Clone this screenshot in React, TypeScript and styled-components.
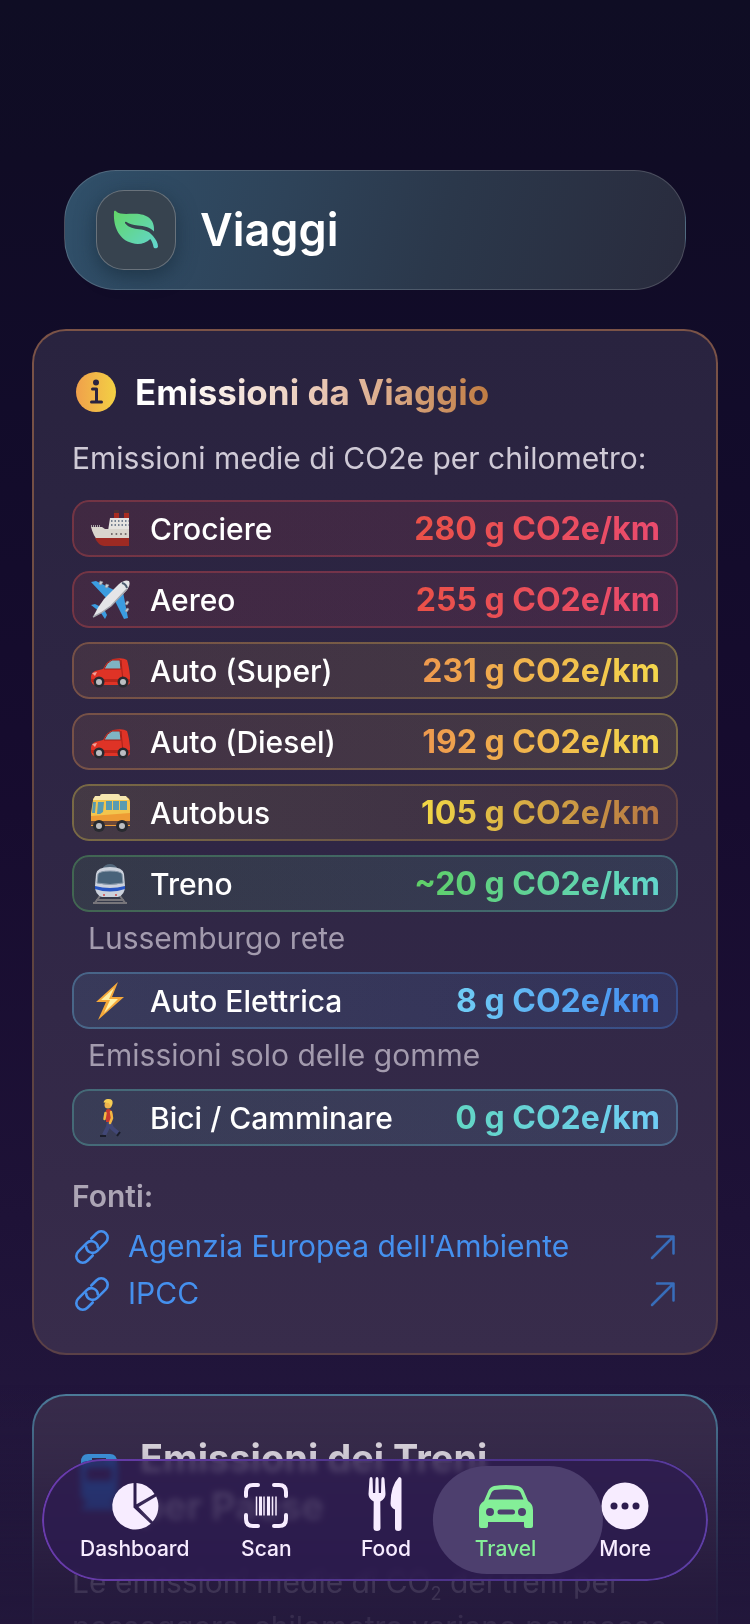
import React from "react";
import styled, { createGlobalStyle } from "styled-components";

const GlobalStyle = createGlobalStyle`
  * {
    box-sizing: border-box;
  }
  body {
    margin: 0;
    background: #0e0b22;
    color: #fff;
    font-family: Inter, "Liberation Sans", sans-serif;
  }
`;

const Screen = styled.div`
  height: 100vh;
  overflow: hidden;
  background: linear-gradient(
    180deg,
    #0f0d24 0%,
    #100c25 10%,
    #120c2a 25%,
    #170c2f 50%,
    #1e1237 75%,
    #22163c 88%,
    #20163a 100%
  );
`;

const Content = styled.main`
  display: flex;
  flex-direction: column;
  gap: 39px;
  padding: 170px 32px 0;
`;

const TitleBar = styled.header`
  display: flex;
  align-items: center;
  gap: 24px;
  margin: 0 32px;
  padding: 19px 31px;
  border: 1px solid rgba(255, 255, 255, 0.16);
  border-radius: 52px;
  background: linear-gradient(105deg, #30506a 0%, #2e4359 35%, #2b384b 60%, #292b3d 100%);
`;

const TitleIcon = styled.span`
  display: grid;
  place-items: center;
  width: 80px;
  height: 80px;
  border: 1px solid rgba(255, 255, 255, 0.25);
  border-radius: 28px;
  background: #37434f;
  box-shadow: 0 6px 20px rgba(20, 40, 55, 0.6);
`;

const Title = styled.h1`
  margin: 0;
  font-size: 45px;
  font-weight: 600;
  line-height: 56px;
`;

const Card = styled.section<{ $edge: string }>`
  padding: 38px 38px 0;
  border: 2px solid transparent;
  border-radius: 34px;
  background: ${({ $edge }) => `linear-gradient(180deg, #29233f 0%, #2f2645 50%, #382c4b 100%) padding-box,
    ${$edge} border-box`};
`;

const CardHead = styled.div`
  display: flex;
  align-items: center;
  gap: 18px;
  padding-left: 3px;
`;

const CardTitle = styled.h2`
  margin: 0;
  font-size: 35px;
  font-weight: 700;
  line-height: 46px;
  color: transparent;
  background: linear-gradient(90deg, #fff 10%, #e6c0aa 58%, #c07c42 100%);
  background-clip: text;
`;

const Intro = styled.p`
  margin: 24px 0 23px;
  font-size: 30px;
  line-height: 38px;
  color: #cfcad6;
`;

const Rows = styled.ul`
  display: flex;
  flex-direction: column;
  gap: 14px;
  margin: 0;
  padding: 0;
  list-style: none;
`;

const Row = styled.div<{ $from: string; $to: string }>`
  position: relative;
  display: flex;
  align-items: center;
  height: 57px;
  padding: 0 18px;
  border-radius: 17px;
  background: ${({ $from, $to }) => `linear-gradient(90deg, ${$from}1c, ${$to}1c)`};

  &::before {
    content: "";
    position: absolute;
    inset: 0;
    padding: 2px;
    border-radius: inherit;
    background: ${({ $from, $to }) => `linear-gradient(90deg, ${$from}4d, ${$to}4d)`};
    mask:
      linear-gradient(#000 0 0) content-box exclude,
      linear-gradient(#000 0 0);
  }
`;

const Mode = styled.span`
  flex: 1;
  margin-left: 20px;
  font-size: 30px;
  font-weight: 500;
  line-height: 38px;
`;

const Amount = styled.span<{ $from: string; $to: string }>`
  font-size: 32px;
  font-weight: 700;
  line-height: 38px;
  color: transparent;
  background: ${({ $from, $to }) => `linear-gradient(90deg, ${$from}, ${$to})`};
  background-clip: text;
`;

const Note = styled.p`
  margin: 7px 16px 1px;
  font-size: 30px;
  line-height: 38px;
  color: #a39bae;
`;

const Sources = styled.div`
  padding: 31px 0 36px;
`;

const SourcesTitle = styled.h3`
  margin: 0 0 8px;
  font-size: 30px;
  font-weight: 600;
  line-height: 38px;
  color: #aca5b5;
`;

const SourceLink = styled.a`
  display: flex;
  align-items: center;
  gap: 18px;
  padding: 0 2px;
  font-size: 30px;
  line-height: 47px;
  color: #4590ee;
  text-decoration: none;
`;

const SourceName = styled.span`
  flex: 1;
`;

const NextCard = styled(Card)`
  height: 320px;
  background: ${({ $edge }) => `linear-gradient(#382c4b 0 0) padding-box, ${$edge} border-box`};
`;

const NextHead = styled.div`
  display: flex;
  align-items: center;
  gap: 22px;
  padding-left: 8px;
`;

const NextTitle = styled.h2`
  margin: 0;
  font-size: 38px;
  font-weight: 700;
  line-height: 48px;
  color: #e9e4ea;
`;

const NextText = styled.p`
  margin: 30px 0 0;
  font-size: 30px;
  line-height: 45px;
  color: #b5aebe;

  sub {
    font-size: 18px;
    line-height: 0;
  }
`;

const Fade = styled.div`
  position: fixed;
  inset: auto 0 0;
  height: 240px;
  background: linear-gradient(
    180deg,
    rgba(34, 23, 59, 0) 0%,
    rgba(34, 23, 59, 0.12) 28%,
    rgba(34, 23, 59, 0.4) 52%,
    rgba(34, 23, 59, 0.8) 84%,
    rgba(34, 23, 59, 0.88) 100%
  );
`;

const TabBar = styled.nav`
  position: fixed;
  right: 42px;
  bottom: 43px;
  left: 42px;
  display: grid;
  grid-template-columns: 6fr repeat(4, 5fr);
  align-items: center;
  height: 122px;
  padding: 0 23px 0 21px;
  border-radius: 61px;
  background: rgba(43, 27, 75, 0.76);
  backdrop-filter: blur(3px) saturate(1.6);

  &::before {
    content: "";
    position: absolute;
    inset: 0;
    padding: 2px;
    border-radius: inherit;
    background: linear-gradient(100deg, #6b3cae 0%, #52358f 40%, #4a3188 75%, #6040a8 100%);
    mask:
      linear-gradient(#000 0 0) content-box exclude,
      linear-gradient(#000 0 0);
  }
`;

const Tab = styled.button<{ $active?: boolean }>`
  position: relative;
  display: flex;
  flex-direction: column;
  align-items: center;
  gap: 2px;
  padding: 0;
  border: 0;
  background: none;
  color: ${({ $active }) => ($active ? "#84ef98" : "#f7ecff")};
  font: 500 21px/26px Inter, "Liberation Sans", sans-serif;

  svg {
    position: relative;
    overflow: visible;
  }
`;

const Highlight = styled.span`
  position: absolute;
  top: 50%;
  left: 50%;
  width: 170px;
  height: 108px;
  border-radius: 54px;
  background: #4d3f6e;
  transform: translate(-43%, -50%);
`;

const TabLabel = styled.span`
  position: relative;
`;

const Leaf = () => (
  <svg width="46" height="40" viewBox="0 0 46 40" aria-hidden="true">
    <defs>
      <linearGradient id="leaf" x1="0" y1="0" x2="1" y2="1">
        <stop offset="0" stopColor="#62d667" />
        <stop offset="1" stopColor="#62d6d0" />
      </linearGradient>
    </defs>
    <path
      fill="url(#leaf)"
      d="M1 2C1 1 2 .3 3 1.2C7 5 14 3.6 22 3.8C34 4 42 9 41 21.500C37 17 31 16 25 15.500C20 15 16 14 13.500 12C12 11 11.500 12.500 12.300 13.500C16 18 21 18.500 26 19.200C33 20 37 22 40 26C43 29.500 45 33 45 36.500C45 38.500 41 39 40.500 37C40 34 39 31 37.300 29C32 34 25 35 19 33C7 30 0 18 1 2Z"
    />
  </svg>
);

const Info = () => (
  <svg width="42" height="42" viewBox="0 0 42 42" aria-hidden="true">
    <defs>
      <linearGradient id="info">
        <stop offset="0" stopColor="#f0a04b" />
        <stop offset="1" stopColor="#f3d144" />
      </linearGradient>
    </defs>
    <circle cx="21" cy="21" r="20" fill="url(#info)" />
    <circle cx="21" cy="11.500" r="3" fill="#2b2440" />
    <path
      fill="none"
      stroke="#2b2440"
      strokeWidth="3"
      strokeLinecap="round"
      strokeLinejoin="round"
      d="M17.500 18h4v13M16.500 31h10"
    />
  </svg>
);

const Ship = () => (
  <svg width="40" height="40" viewBox="0 0 40 40" aria-hidden="true">
    <path fill="#a82c1f" d="M24 2h5v9h-5zM34 2h5v9h-5z" />
    <path fill="#4b3136" d="M24 1h5v3h-5zM34 1h5v3h-5z" />
    <path fill="#e5e3df" d="M20 9h19v13H18z" />
    <path fill="#d9d5cd" d="M1 18h11l3 2h24v12H8Q3 26 1 18z" />
    <path fill="#9d2a23" d="M5 29h34v8H14Q8 36 5 29z" />
    <path stroke="#52637a" strokeWidth="1.500" strokeDasharray="1.500 2" d="M21 12h18M21 16h18" />
    <path stroke="#554b4d" strokeWidth="1.600" strokeDasharray="1.600 3" d="M21 25h18" />
    <path stroke="#aaa6a8" strokeWidth="2" strokeDasharray="1 1" d="M1 17h9" />
  </svg>
);

const Plane = () => (
  <svg width="40" height="40" viewBox="0 0 40 40" aria-hidden="true">
    <path fill="#3b9ce0" d="M1 2l5-1 20 10-9 8zM38 38l-4 1-10-20 9-7zM1 25l4-1 8 4-3 4zM15 39l2-4-4-8-4 3z" />
    <path fill="#c9ccd2" stroke="#8e939b" strokeWidth=".6" d="M10 1l3 1-2 3-2-1zM16 4l3 1-2 3-2-1zM39 22l-2 3-2-1 2-3zM39 29l-2 3-2-1 2-3z" />
    <path fill="#e4e5e8" d="M39 1q2 4-3 10L21 26Q12 33 3 37Q7 28 14 19L29 4q6-5 10-3z" />
    <path fill="none" stroke="#a3a6ae" strokeWidth="1.500" d="M37 9L21 26Q12 33 3 37" />
    <path fill="none" stroke="#4c5c70" strokeWidth="2" d="M32 3q4 1 5 5" />
  </svg>
);

const Car = () => (
  <svg width="40" height="40" viewBox="0 0 40 40" aria-hidden="true">
    <path fill="#df3326" d="M1 26q0-4 4-6l8-2q4-8 10-10 10-2 14 1 2 6 3 16v6q0 3-4 3H5q-4 0-4-8z" />
    <path fill="#7fb4c4" stroke="#a72018" d="M14 18q3-7 8-9h8l1 9z" />
    <path fill="#b8251b" d="M1 28h39v3H1z" />
    <path stroke="#a72018" d="M31 9l2 22" />
    <path fill="#f1a299" d="M2 22l5-1-2 4z" />
    <circle cx="9" cy="31" r="5.500" fill="#282a30" />
    <circle cx="9" cy="31" r="3" fill="#bcbec2" />
    <circle cx="33" cy="31" r="5.500" fill="#282a30" />
    <circle cx="33" cy="31" r="3" fill="#bcbec2" />
  </svg>
);

const Bus = () => (
  <svg width="40" height="40" viewBox="0 0 40 40" aria-hidden="true">
    <path fill="#f6e7b0" d="M12 1h16q2 0 2 2v3H10V3q0-2 2-2z" />
    <path fill="#f3c54d" d="M5 4h31q4 1 4 5v23H1V20L3 7q0-2 2-3z" />
    <path fill="#ee9c34" d="M1 23l39-3v13H1z" />
    <path fill="#f6e7b0" d="M5 3h31l3 4H3z" />
    <path fill="#589bb1" d="M3 9h3L5 20H2zM8 9h6l-1 10-3 2H7zM16 8h6v9h-6zM23 8h6v9h-6zM30 8h7v9h-7z" />
    <path fill="#6d4939" d="M1 28h39v4H1z" />
    <circle cx="9" cy="33" r="6" fill="#282a30" />
    <circle cx="9" cy="33" r="3" fill="#bcbec2" />
    <circle cx="32" cy="33" r="6" fill="#282a30" />
    <circle cx="32" cy="33" r="3" fill="#bcbec2" />
  </svg>
);

const Train = () => (
  <svg width="40" height="40" viewBox="0 0 40 40" aria-hidden="true">
    <path stroke="#77757a" strokeWidth="2" d="M10 32l-6 8M30 32l6 8M6 36h28M3 39h34" />
    <path fill="#53677b" d="M12 5q3-5 8-5t8 5z" />
    <path fill="#cbd1dc" d="M6 10q1-7 14-7t14 7l1 12q0 9-7 11H12q-7-2-7-11z" />
    <path fill="#48637a" stroke="#8899aa" d="M8 10q2-3 12-3t12 3l1 9q-13 3-26 0z" />
    <path fill="#2856c4" d="M5 22q15 4 30 0v3q-15 5-30 0z" />
    <circle cx="14" cy="31" r="1" fill="#d04646" />
    <circle cx="26" cy="31" r="1" fill="#d04646" />
  </svg>
);

const Bolt = () => (
  <svg width="40" height="40" viewBox="0 0 40 40" aria-hidden="true">
    <path fill="#f4a83a" d="M28 1L6 21h10L8 39 34 16H22z" />
    <path fill="#fff0a3" d="M24 7L11 19h9l-6 13 14-14h-9z" />
  </svg>
);

const Walker = () => (
  <svg width="40" height="40" viewBox="0 0 40 40" aria-hidden="true">
    <path fill="none" stroke="#414776" strokeWidth="4" strokeLinejoin="round" d="M19 23l-1 6-4 8M19 24l3 6 6 5" />
    <path fill="#c93a2e" d="M16 12q2-2 5 0l2 5-1 7h-6z" />
    <path fill="none" stroke="#f1b843" strokeWidth="2.500" strokeLinecap="round" d="M21 14l1 6-2 5M15.500 15l-1 6" />
    <circle cx="18" cy="7" r="3.500" fill="#eeb44c" />
    <path fill="#f8cf54" d="M13.500 4.500q1-4 5-3.500 5 0 4 5l-1.500 3-2-4z" />
    <path stroke="#1b1d2b" strokeWidth="2" d="M10 38h6M27 38l3-4" />
  </svg>
);

const Chain = () => (
  <svg
    width="36"
    height="36"
    viewBox="-1 -1 36 36"
    fill="none"
    stroke="currentColor"
    strokeWidth="2.600"
    strokeLinecap="round"
    aria-hidden="true"
  >
    <g transform="rotate(-45 17 17)">
      <path d="M11.500 23.500H4a6.500 6.500 0 0 1 0-13h12a6.500 6.500 0 0 1 4.800 10.900" />
      <path d="M22.500 10.500H30a6.500 6.500 0 0 1 0 13H18a6.500 6.500 0 0 1-4.800-10.900" />
    </g>
  </svg>
);

const Arrow = () => (
  <svg
    width="26"
    height="26"
    viewBox="0 0 26 26"
    fill="none"
    stroke="#386dba"
    strokeWidth="2.500"
    strokeLinecap="round"
    strokeLinejoin="round"
    aria-hidden="true"
  >
    <path d="M2 24L23.500 2.500M7 2.500h16.500v17" />
  </svg>
);

const Tram = () => (
  <svg width="38" height="56" viewBox="0 0 38 56" aria-hidden="true">
    <path
      fill="#3fa0ea"
      fillRule="evenodd"
      d="M8 0h22q7 0 7 8v32q0 6-6 7l6 9H1l6-9q-6-1-6-7V8q0-8 7-8zM12 4v3h14V4zM6 13v14h26V13z"
    />
  </svg>
);

const Pie = () => (
  <svg width="56" height="56" viewBox="0 0 56 56" aria-hidden="true">
    <path
      fill="currentColor"
      d="M26.500 5v24.500l17.300 16.300A23.300 23.300 0 1 1 26.500 5zM29.500 5A23 23 0 0 1 47.500 16L29.500 26.200zM49.200 18.500A23 23 0 0 1 45.700 43.500L31.500 29z"
    />
  </svg>
);

const Scan = () => (
  <svg width="56" height="56" viewBox="0 0 56 56" fill="none" stroke="currentColor" aria-hidden="true">
    <path
      strokeWidth="4"
      strokeLinecap="round"
      d="M8 18v-4q0-7 7-7h5M36 7h5q7 0 7 7v4M48 37v4q0 7-7 7h-5M20 48h-5q-7 0-7-7v-4"
    />
    <path strokeWidth="1.500" d="M18.500 18.500v19M38 18.500v19M26 18.500v19M34.500 18.500v19" />
    <path strokeWidth="3" d="M22.500 18.500v19M30.500 18.500v19" />
  </svg>
);

const Cutlery = () => (
  <svg width="56" height="56" viewBox="0 0 56 56" aria-hidden="true">
    <path
      fill="currentColor"
      d="M11.500 1q.2-2 1.600-2t1.500 2l.4 14h2.200L17.500 1q.1-2 1.500-2t1.500 2l.3 14H23l.4-14q.1-2 1.500-2t1.600 2l1 15q0 5-5.200 7.500L22.500 50q0 3-3.500 3t-3.500-3l.2-26.500Q10.500 21 10.500 16z"
    />
    <path fill="currentColor" d="M41 -1q2.500 0 2.500 2.500V50q0 3-3.300 3T37 50V31.500q-4.500-2-4.500-6Q32.500 8 41-1z" />
  </svg>
);

const CarFront = () => (
  <svg width="56" height="56" viewBox="0 0 56 56" aria-hidden="true">
    <path
      fill="currentColor"
      fillRule="evenodd"
      d="M16 8Q28 6 40 8q4 1 5.500 4.500L50 23q5 3 5 9v16q0 2-2 2h-5q-2 0-2-2v-4H10v4q0 2-2 2H3q-2 0-2-2V32q0-6 5-9l4.500-10.500Q12 9 16 8zM16.500 12q-2 .5-3 2.500L10.500 21.500h35L42.500 14.500q-1-2-3-2.500Q28 10.500 16.500 12zM12 30a4 4 0 1 0 0 8 4 4 0 0 0 0-8zM44 30a4 4 0 1 0 0 8 4 4 0 0 0 0-8zM22 31.500q-2.500 0-2.500 2.500t2.500 2.500h12.500q2.500 0 2.500-2.500t-2.500-2.500z"
    />
  </svg>
);

const More = () => (
  <svg width="56" height="56" viewBox="0 0 56 56" aria-hidden="true">
    <circle cx="28" cy="28" r="23.500" fill="currentColor" />
    <g fill="#2d1c4e">
      <circle cx="17" cy="28" r="3.500" />
      <circle cx="28" cy="28" r="3.500" />
      <circle cx="39" cy="28" r="3.500" />
    </g>
  </svg>
);

const emissions = [
  { name: "Crociere", amount: "280 g CO2e/km", from: "#ea5148", to: "#ea4b6e", icon: <Ship /> },
  { name: "Aereo", amount: "255 g CO2e/km", from: "#ea5148", to: "#ea4b6e", icon: <Plane /> },
  { name: "Auto (Super)", amount: "231 g CO2e/km", from: "#ee994e", to: "#f4d74c", icon: <Car /> },
  { name: "Auto (Diesel)", amount: "192 g CO2e/km", from: "#ee994e", to: "#f4d74c", icon: <Car /> },
  { name: "Autobus", amount: "105 g CO2e/km", from: "#f2d846", to: "#b67643", icon: <Bus /> },
  { name: "Treno", amount: "~20 g CO2e/km", from: "#5fcf66", to: "#62d6cc", icon: <Train />, note: "Lussemburgo rete" },
  {
    name: "Auto Elettrica",
    amount: "8 g CO2e/km",
    from: "#70cdf5",
    to: "#438bf0",
    icon: <Bolt />,
    note: "Emissioni solo delle gomme",
  },
  { name: "Bici / Camminare", amount: "0 g CO2e/km", from: "#62d6c4", to: "#70cdf5", icon: <Walker /> },
];

const sources = [
  { name: "Agenzia Europea dell'Ambiente", href: "#eea" },
  { name: "IPCC", href: "#ipcc" },
];

const tabs = [
  { label: "Dashboard", icon: <Pie /> },
  { label: "Scan", icon: <Scan /> },
  { label: "Food", icon: <Cutlery /> },
  { label: "Travel", icon: <CarFront />, active: true },
  { label: "More", icon: <More /> },
];

const App: React.FC = () => (
  <>
    <GlobalStyle />
    <Screen>
      <Content>
        <TitleBar>
          <TitleIcon>
            <Leaf />
          </TitleIcon>
          <Title>Viaggi</Title>
        </TitleBar>
        <Card $edge="linear-gradient(180deg, #7b5347, #60443f 60%, #5b4147)">
          <CardHead>
            <Info />
            <CardTitle>Emissioni da Viaggio</CardTitle>
          </CardHead>
          <Intro>Emissioni medie di CO2e per chilometro:</Intro>
          <Rows>
            {emissions.map(({ name, amount, from, to, icon, note }) => (
              <li key={name}>
                <Row $from={from} $to={to}>
                  {icon}
                  <Mode>{name}</Mode>
                  <Amount $from={from} $to={to}>
                    {amount}
                  </Amount>
                </Row>
                {note && <Note>{note}</Note>}
              </li>
            ))}
          </Rows>
          <Sources>
            <SourcesTitle>Fonti:</SourcesTitle>
            {sources.map(({ name, href }) => (
              <SourceLink key={name} href={href}>
                <Chain />
                <SourceName>{name}</SourceName>
                <Arrow />
              </SourceLink>
            ))}
          </Sources>
        </Card>
        <NextCard $edge="linear-gradient(180deg, #4d7d9b, #3a5470 40%, #33324f)">
          <NextHead>
            <Tram />
            <NextTitle>
              Emissioni dei Treni
              <br />
              per Paese
            </NextTitle>
          </NextHead>
          <NextText>
            Le emissioni medie di CO<sub>2</sub> dei treni per passeggero-chilometro variano per paese
          </NextText>
        </NextCard>
      </Content>
      <Fade />
      <TabBar>
        {tabs.map(({ label, icon, active }) => (
          <Tab key={label} type="button" $active={active}>
            {active && <Highlight />}
            {icon}
            <TabLabel>{label}</TabLabel>
          </Tab>
        ))}
      </TabBar>
    </Screen>
  </>
);

export default App;
